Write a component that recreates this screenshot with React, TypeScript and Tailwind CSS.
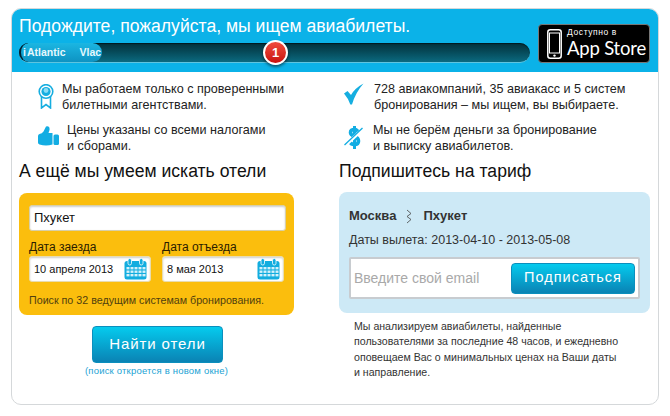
import React from "react";

const Cal = () => (
  <svg width="23" height="22" viewBox="0 0 23 22" className="shrink-0">
    <rect x="0.5" y="3" width="22" height="18.5" rx="2.5" fill="#12addf" />
    <rect x="4" y="0.5" width="3.5" height="6.5" rx="1.7" fill="#12addf" stroke="#fff" strokeWidth="0.8" />
    <rect x="15.5" y="0.5" width="3.5" height="6.5" rx="1.7" fill="#12addf" stroke="#fff" strokeWidth="0.8" />
    {[9, 12.5, 16].map((y) =>
      [3, 7, 11, 15, 19].map((x) => <rect key={`${x}-${y}`} x={x - 0.5} y={y} width="3" height="2.4" fill="#d4f1fb" />)
    )}
  </svg>
);

const Ribbon = () => (
  <svg width="16" height="25" viewBox="0 0 16 25">
    <path d="M3.5 12 V24 L8 20.5 L12.5 24 V12" fill="#fff" stroke="#16aee0" strokeWidth="1.6" />
    <circle cx="8" cy="7.5" r="6.8" fill="#fff" stroke="#16aee0" strokeWidth="1.6" />
    <circle cx="8" cy="7.5" r="4.6" fill="#16aee0" />
    <circle cx="8" cy="6.5" r="2.4" fill="#8adcf5" />
  </svg>
);

const Thumb = () => (
  <svg width="21" height="20" viewBox="0 0 21 20">
    <path d="M0 10 Q0 8.5 1.5 8 Q4 7.5 5.5 5.5 L8 0.5 Q12 -0.5 11.5 4 L10.5 7 H14.5 V18.5 Q8 20.5 1.5 18.5 Q0 18 0 16.5 Z" fill="#12ade3" />
    <rect x="15.5" y="8.5" width="5.5" height="10.5" rx="1.5" fill="#12ade3" />
  </svg>
);

const Check = () => (
  <svg width="20" height="22" viewBox="0 0 20 22">
    <path d="M0 10.5 L3.5 8 L7 12 Q11 5 19.5 0.5 Q11.5 9.5 8 21.5 L6.3 21.5 Q4 15 0 10.5 Z" fill="#16aee0" />
  </svg>
);

const Dollar = () => (
  <svg width="20" height="25" viewBox="0 0 20 25">
    <path d="M14 7.5 Q13.5 4.5 10.5 4.5 Q6.5 4.5 6.5 7.5 Q6.5 10 10.5 11.5 Q14.5 13 14.5 16 Q14.5 19.5 10.5 19.5 Q6.5 19.5 6 16.5" fill="none" stroke="#12ade3" strokeWidth="3.6" />
    <rect x="9" y="1" width="3" height="23" fill="#12ade3" />
    <path d="M0 21.5 L19.5 3.5" stroke="#fff" strokeWidth="3.4" />
    <path d="M0.5 20 L18.5 3" stroke="#12ade3" strokeWidth="1.3" />
  </svg>
);

const Phone = () => (
  <svg width="15" height="30" viewBox="0 0 15 30">
    <rect x="0.8" y="0.8" width="13.4" height="28.4" rx="2.5" fill="none" stroke="#fff" strokeWidth="1.5" />
    <rect x="2.5" y="4" width="10" height="20" fill="none" stroke="#fff" strokeWidth="1" />
    <circle cx="7.5" cy="26.6" r="1.2" fill="#fff" />
  </svg>
);

const Feature = ({ icon, className, children }: { icon: React.ReactNode; className: string; children: React.ReactNode }) => (
  <div className={`flex ${className}`}>
    {icon}
    <p className="text-[12.6px] leading-[15.5px] text-[#222]">{children}</p>
  </div>
);

const gradBtn = "bg-gradient-to-b from-[#05cbee] to-[#0a83b4] rounded-[4px] text-white flex items-center justify-center border border-[#0b8fbd]";

export default function App() {
  return (
    <div className="w-[670px] h-[416px] bg-white pt-2 pl-[11px] overflow-hidden font-['Liberation_Sans',Arial,sans-serif]">
      <div className="w-[648px] h-[397px] rounded-[10px] border border-[#d5d8da] bg-white overflow-hidden">
        {/* header */}
        <div className="h-[63px] bg-[#0bb2e8] flex pl-[7px] pr-[7px]">
          <div className="w-[511px] pt-[7px]">
            <h1 className="text-[17.6px] leading-[20px] text-white">Подождите, пожалуйста, мы ищем авиабилеты.</h1>
            <div className="relative mt-[7px] h-[20px] rounded-full bg-gradient-to-b from-[#03303a] to-[#0b6a80] border-b border-[#5ec4df] shadow-[inset_0_1px_1px_rgba(0,0,0,0.5)]">
              <div className="h-[19px] w-[83px] rounded-full border-l-2 border-[#023] bg-gradient-to-b from-[#1bb6e2] to-[#0e93c2] flex items-center overflow-hidden whitespace-nowrap text-[10.5px] font-bold text-[#e6f8fd]">
                <span className="w-[5px] overflow-hidden shrink-0 text-right">i</span>
                <span className="ml-[1px]">Atlantic</span>
                <span className="ml-[14px]">Vlac</span>
              </div>
              <div className="absolute left-[244px] top-[-3px] w-[25px] h-[25px] rounded-full bg-gradient-to-b from-[#f04a3c] to-[#c90d0d] border-2 border-white shadow-[0_2px_3px_rgba(0,0,0,0.5)] flex items-center justify-center text-white text-[13px] font-bold">1</div>
            </div>
          </div>
          <div className="ml-[8px] mt-[15px] w-[112px] h-[39px] bg-black rounded-[4px] border border-[#777] flex items-center pl-[8px] gap-[5px] text-white">
            <Phone />
            <div className="flex flex-col">
              <span className="text-[8.5px] leading-[10px] tracking-[0.6px]">Доступно в</span>
              <span className="text-[18.5px] leading-[23px] tracking-[-0.2px] font-['Lato',sans-serif]">App Store</span>
            </div>
          </div>
        </div>

        {/* body */}
        <div className="flex pl-[7px]">
          <div className="w-[320px]">
            <Feature className="mt-[10px] pl-[19px]" icon={<div className="w-[24px] mt-[2px] shrink-0"><Ribbon /></div>}>
              Мы работаем только с проверенными<br />билетными агентствами.
            </Feature>
            <Feature className="mt-[10px] pl-[19px]" icon={<div className="w-[29px] mt-[3px] shrink-0"><Thumb /></div>}>
              Цены указаны со всеми налогами<br />и сборами.
            </Feature>
            <h2 className="mt-[6px] text-[17.6px] leading-[22px] text-[#111]">А ещё мы умеем искать отели</h2>
            <div className="mt-[11px] w-[275px] h-[122px] rounded-[8px] bg-[#fbbe0d] px-[10px] pt-[12px] pb-[8px]">
              <div className="h-[26px] w-[257px] bg-white rounded-[3px] border border-[#d7cfa8] shadow-[inset_0_1px_2px_rgba(0,0,0,0.2)] flex items-center pl-[4px] text-[13px] text-[#111]">Пхукет</div>
              <div className="flex gap-[11px] mt-[9px]">
                {["10 апреля 2013", "8 мая 2013"].map((d, i) => (
                  <div key={d} className="w-[123px]">
                    <div className="text-[12px] leading-[14px] text-[#2a1c00]">{i === 0 ? "Дата заезда" : "Дата отъезда"}</div>
                    <div className="mt-[2px] h-[26px] bg-white rounded-[3px] border border-[#e8dcae] shadow-[inset_0_1px_2px_rgba(0,0,0,0.2)] flex items-center justify-between pl-[4px] pr-[3px] text-[11px] text-[#111]">
                      {d}
                      <Cal />
                    </div>
                  </div>
                ))}
              </div>
              <p className="mt-[12px] text-[10.7px] leading-[13px] text-[#50400f]">Поиск по 32 ведущим системам бронирования.</p>
            </div>
            <div className="w-[275px] flex flex-col items-center">
              <div className={`mt-[11px] ml-[2px] w-[131px] h-[37px] text-[15px] tracking-[0.9px] ${gradBtn}`}>Найти отели</div>
              <p className="mt-[2px] text-[9.5px] leading-[12px] tracking-[0.2px] text-[#22a3d4]">(поиск откроется в новом окне)</p>
            </div>
          </div>

          <div className="flex-1">
            <Feature className="mt-[10px] pl-[5px]" icon={<div className="w-[30px] mt-[1px] shrink-0"><Check /></div>}>
              728 авиакомпаний, 35 авиакасс и 5 систем<br />бронирования – мы ищем, вы выбираете.
            </Feature>
            <Feature className="mt-[10px] pl-[5px]" icon={<div className="w-[29px] mt-[2px] shrink-0"><Dollar /></div>}>
              Мы не берём деньги за бронирование<br />и выписку авиабилетов.
            </Feature>
            <h2 className="mt-[6px] text-[17.6px] leading-[22px] text-[#111]">Подпишитесь на тариф</h2>
            <div className="mt-[10px] w-[311px] h-[121px] rounded-[8px] bg-[#cde9f6] px-[10px] pt-[15px]">
              <div className="flex items-center text-[13px] leading-[18px] font-bold text-[#333]">
                Москва
                <svg width="8" height="15" viewBox="0 0 8 15" className="ml-[9px] mr-[10px]">
                  <path d="M2 1 L6 4.5 L2 7.5 L6 10.5 L2 14" fill="none" stroke="#444" strokeWidth="0.8" />
                </svg>
                Пхукет
              </div>
              <p className="mt-[8px] text-[12.5px] leading-[15px] text-[#333]">Даты вылета: 2013-04-10 - 2013-05-08</p>
              <div className="mt-[9px] h-[42px] w-[291px] bg-white border-2 border-[#c8ccd0] rounded-[2px] flex items-center justify-between pl-[3px] pr-[3px]">
                <span className="text-[14px] text-[#a9a9a9]">Введите свой email</span>
                <div className={`w-[124px] h-[31px] text-[14.5px] tracking-[1px] ${gradBtn}`}>Подписаться</div>
              </div>
            </div>
            <p className="mt-[6px] ml-[15px] text-[10.6px] leading-[15.3px] text-[#333]">
              Мы анализируем авиабилеты, найденные<br />
              пользователями за последние 48 часов, и ежедневно<br />
              оповещаем Вас о минимальных ценах на Ваши даты<br />
              и направление.
            </p>
          </div>
        </div>
      </div>
    </div>
  );
}
